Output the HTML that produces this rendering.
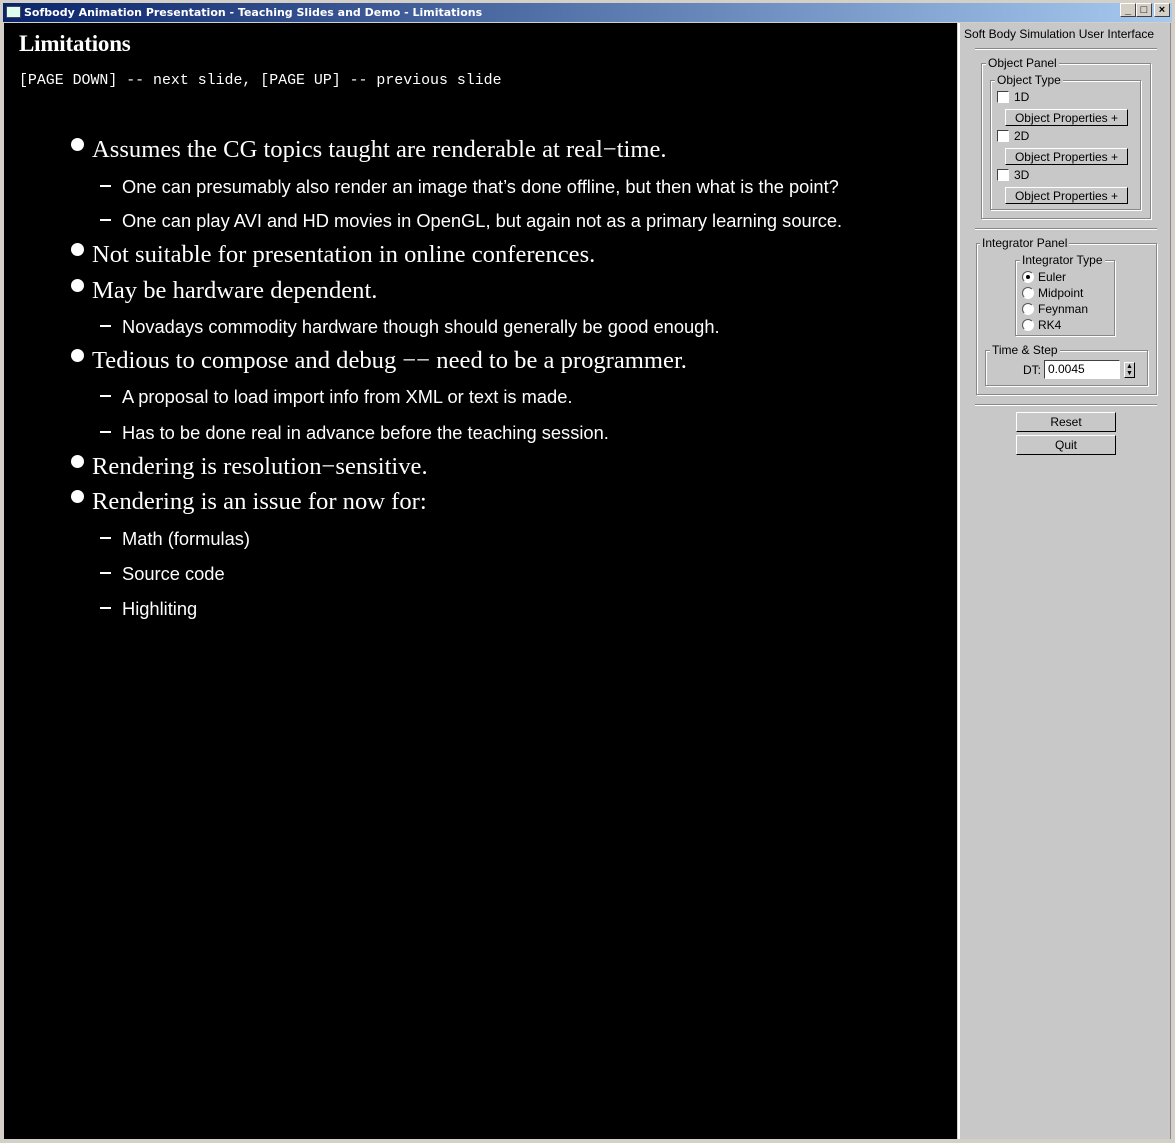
<!DOCTYPE html>
<html><head><meta charset="utf-8"><style>
*{margin:0;padding:0;box-sizing:border-box}
body{width:1175px;height:1143px;background:#d4d0c8;position:relative;overflow:hidden;font-family:"Liberation Sans",sans-serif}
.tb{position:absolute;left:3px;top:3px;width:1169px;height:19px;background:linear-gradient(to right,#0a246a,#a6caf0);color:#fff;font:bold 11px "DejaVu Sans",sans-serif;line-height:19px;padding-left:21px;white-space:nowrap}
.ic{position:absolute;left:3px;top:3px;width:15px;height:12px;background:#dfe;border:1px solid #446}
.wb{position:absolute;top:3px;width:16px;height:14px;background:#d4d0c8;border:1px solid;border-color:#fff #404040 #404040 #fff;color:#000;font:bold 11px sans-serif;line-height:12px;text-align:center}
.main{position:absolute;left:4px;top:23px;width:953px;height:1116px;background:#000;color:#fff}
.a{position:absolute;white-space:nowrap}
.s{font-family:"Liberation Serif",serif;font-size:24.6px;line-height:26px}
.b{font-family:"Liberation Sans",sans-serif;font-size:18.3px;line-height:20px}
.dot{position:absolute;width:13px;height:13px;border-radius:50%;background:#fff}
.dash{position:absolute;width:11px;height:2px;background:#fff}
.p{position:absolute;left:958px;top:23px;width:213px;height:1116px;background:#c8c8c8;border-left:2px solid #fff;border-right:1px solid #888;font-size:12px;color:#000}
.g{position:absolute;border:1px solid #888;box-shadow:1px 1px 0 #fff,inset 1px 1px 0 #fff}
.lg{position:absolute;background:#c8c8c8;padding:0 2px;line-height:13px;white-space:nowrap}
.t{position:absolute;white-space:nowrap;line-height:14px}
.cb{position:absolute;width:12px;height:12px;background:#fff;border:1px solid;border-color:#404040 #fff #fff #404040}
.btn{position:absolute;background:#c8c8c8;border:1px solid;border-color:#fff #000 #000 #fff;text-align:center;line-height:16px;white-space:nowrap}
.rd{position:absolute;width:12px;height:12px;border-radius:50%;background:#fff;border:1px solid;border-color:#555 #fff #fff #555}
.hr{position:absolute;height:2px;border-top:1px solid #888;border-bottom:1px solid #fff}
</style></head><body>
<div class="tb"><div class="ic"></div>Sofbody Animation Presentation - Teaching Slides and Demo - Limitations</div>
<div class="wb" style="left:1120px">_</div><div class="wb" style="left:1136px">□</div><div class="wb" style="left:1154px">×</div>
<div class="main">
<div class="a" style="left:15px;top:8px;font:bold 23px 'Liberation Serif',serif;letter-spacing:-0.2px">Limitations</div>
<div class="a" style="left:15px;top:50px;font:14.9px 'Liberation Mono',monospace">[PAGE DOWN] -- next slide, [PAGE UP] -- previous slide</div>

<div class="dot" style="left:67px;top:115px"></div><div class="a s" style="left:88px;top:114px">Assumes the CG topics taught are renderable at real−time.</div>
<div class="dash" style="left:96px;top:162px"></div><div class="a b" style="left:118px;top:154px">One can presumably also render an image that’s done offline, but then what is the point?</div>
<div class="dash" style="left:96px;top:196px"></div><div class="a b" style="left:118px;top:188px">One can play AVI and HD movies in OpenGL, but again not as a primary learning source.</div>
<div class="dot" style="left:67px;top:220px"></div><div class="a s" style="left:88px;top:219px">Not suitable for presentation in online conferences.</div>
<div class="dot" style="left:67px;top:256px"></div><div class="a s" style="left:88px;top:255px">May be hardware dependent.</div>
<div class="dash" style="left:96px;top:302px"></div><div class="a b" style="left:118px;top:294px">Novadays commodity hardware though should generally be good enough.</div>
<div class="dot" style="left:67px;top:326px"></div><div class="a s" style="left:88px;top:325px">Tedious to compose and debug −− need to be a programmer.</div>
<div class="dash" style="left:96px;top:372px"></div><div class="a b" style="left:118px;top:364px">A proposal to load import info from XML or text is made.</div>
<div class="dash" style="left:96px;top:408px"></div><div class="a b" style="left:118px;top:400px">Has to be done real in advance before the teaching session.</div>
<div class="dot" style="left:67px;top:432px"></div><div class="a s" style="left:88px;top:431px">Rendering is resolution−sensitive.</div>
<div class="dot" style="left:67px;top:467px"></div><div class="a s" style="left:88px;top:466px">Rendering is an issue for now for:</div>
<div class="dash" style="left:96px;top:514px"></div><div class="a b" style="left:118px;top:506px">Math (formulas)</div>
<div class="dash" style="left:96px;top:549px"></div><div class="a b" style="left:118px;top:541px">Source code</div>
<div class="dash" style="left:96px;top:584px"></div><div class="a b" style="left:118px;top:576px">Highliting</div>
</div>

<div class="p">
<div class="t" style="left:4px;top:4px">Soft Body Simulation User Interface</div>
<div class="hr" style="left:15px;top:25px;width:182px"></div>
<div class="g" style="left:21px;top:40px;width:170px;height:156px"></div><div class="lg" style="left:26px;top:34px">Object Panel</div>
<div class="g" style="left:30px;top:57px;width:151px;height:130px"></div><div class="lg" style="left:35px;top:51px">Object Type</div>
<div class="cb" style="left:37px;top:68px"></div><div class="t" style="left:54px;top:67px">1D</div>
<div class="btn" style="left:45px;top:86px;width:123px;height:17px">Object Properties +</div>
<div class="cb" style="left:37px;top:107px"></div><div class="t" style="left:54px;top:106px">2D</div>
<div class="btn" style="left:45px;top:125px;width:123px;height:17px">Object Properties +</div>
<div class="cb" style="left:37px;top:146px"></div><div class="t" style="left:54px;top:145px">3D</div>
<div class="btn" style="left:45px;top:164px;width:123px;height:17px">Object Properties +</div>
<div class="hr" style="left:15px;top:205px;width:182px"></div>
<div class="g" style="left:16px;top:220px;width:181px;height:152px"></div><div class="lg" style="left:20px;top:214px">Integrator Panel</div>
<div class="g" style="left:55px;top:237px;width:100px;height:76px"></div><div class="lg" style="left:60px;top:231px">Integrator Type</div>
<div class="rd" style="left:62px;top:248px"></div><div style="position:absolute;left:66px;top:252px;width:4px;height:4px;background:#000;border-radius:50%"></div><div class="t" style="left:78px;top:247px">Euler</div>
<div class="rd" style="left:62px;top:264px"></div><div class="t" style="left:78px;top:263px">Midpoint</div>
<div class="rd" style="left:62px;top:280px"></div><div class="t" style="left:78px;top:279px">Feynman</div>
<div class="rd" style="left:62px;top:296px"></div><div class="t" style="left:78px;top:295px">RK4</div>
<div class="g" style="left:25px;top:327px;width:163px;height:36px"></div><div class="lg" style="left:30px;top:321px">Time &amp; Step</div>
<div class="t" style="left:63px;top:340px">DT:</div>
<div style="position:absolute;left:84px;top:337px;width:76px;height:19px;background:#fff;border:1px solid;border-color:#404040 #fff #fff #404040;padding-left:3px;line-height:16px">0.0045</div>
<div class="btn" style="left:164px;top:339px;width:11px;height:16px;font-size:7px;line-height:7px">▲<br>▼</div>
<div class="hr" style="left:15px;top:381px;width:182px"></div>
<div class="btn" style="left:56px;top:389px;width:100px;height:20px;line-height:18px">Reset</div>
<div class="btn" style="left:56px;top:412px;width:100px;height:20px;line-height:18px">Quit</div>
</div>
</body></html>
